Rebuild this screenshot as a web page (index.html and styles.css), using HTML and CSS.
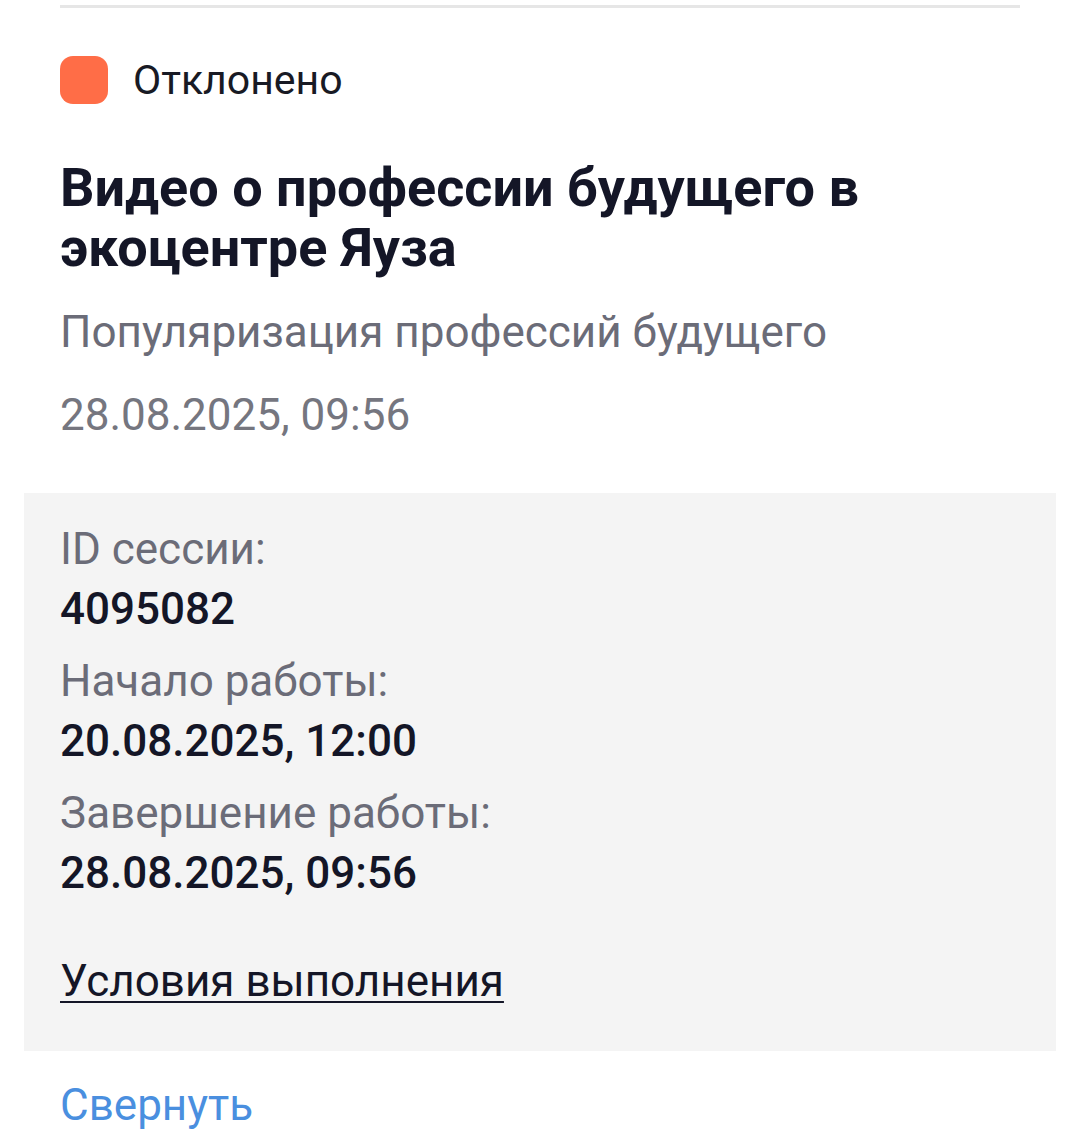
FILE: index.html
```html
<!DOCTYPE html>
<html lang="ru">
<head>
<meta charset="utf-8">
<link rel="stylesheet" href="styles.css">
</head>
<body>
<div class="page">
  <div class="divider"></div>
  <div class="status">
    <span class="status-dot"></span>
    <span class="status-text">Отклонено</span>
  </div>
  <h1 class="title">Видео о профессии будущего в экоцентре Яуза</h1>
  <div class="subtitle">Популяризация профессий будущего</div>
  <div class="date">28.08.2025, 09:56</div>
  <div class="details">
    <div class="field">
      <div class="label">ID сессии:</div>
      <div class="value">4095082</div>
    </div>
    <div class="field">
      <div class="label">Начало работы:</div>
      <div class="value">20.08.2025, 12:00</div>
    </div>
    <div class="field">
      <div class="label">Завершение работы:</div>
      <div class="value">28.08.2025, 09:56</div>
    </div>
    <a class="conditions" href="#">Условия выполнения</a>
  </div>
  <a class="collapse" href="#">Свернуть</a>
</div>
</body>
</html>
```

FILE: styles.css
```css
html, body {
  margin: 0;
  padding: 0;
  background: #ffffff;
}
body {
  font-family: Roboto, "Noto Sans", "Liberation Sans", sans-serif;
  color: #14161f;
}
.page {
  padding: 0 60px;
  width: 960px;
}
.divider {
  margin-top: 5px;
  height: 3px;
  background: #e6e6e6;
}
.status {
  margin-top: 48px;
  display: flex;
  align-items: center;
  gap: 25px;
  height: 48px;
}
.status-dot {
  width: 48px;
  height: 48px;
  border-radius: 13px;
  background: #ff6d47;
  flex: none;
}
.status-text {
  font-size: 41px;
  line-height: 48px;
  color: #181a24;
}
.title {
  margin: 54px 0 0;
  font-size: 54px;
  line-height: 60px;
  font-weight: 700;
  color: #141627;
  width: 860px;
}
.subtitle {
  margin-top: 28px;
  font-size: 44px;
  line-height: 52px;
  color: #6b6c78;
}
.date {
  margin-top: 31px;
  font-size: 44px;
  line-height: 52px;
  color: #75767f;
}
.details {
  margin: 52px -36px 0;
  padding: 26px 36px 40px;
  background: #f4f4f4;
  display: flex;
  flex-direction: column;
}
.field {
  display: flex;
  flex-direction: column;
  margin-bottom: 12px;
}
.label {
  font-size: 44px;
  line-height: 60px;
  color: #6b6c78;
}
.value {
  font-size: 44px;
  line-height: 60px;
  font-weight: 500;
  color: #141627;
}
.conditions {
  margin-top: 36px;
  align-self: flex-start;
  font-size: 44px;
  line-height: 60px;
  color: #141627;
  text-decoration: underline;
  text-decoration-thickness: 2px;
  text-underline-offset: 5px;
}
.collapse {
  display: inline-block;
  margin-top: 24px;
  font-size: 44px;
  line-height: 60px;
  color: #4a8fdf;
  text-decoration: none;
}
```
